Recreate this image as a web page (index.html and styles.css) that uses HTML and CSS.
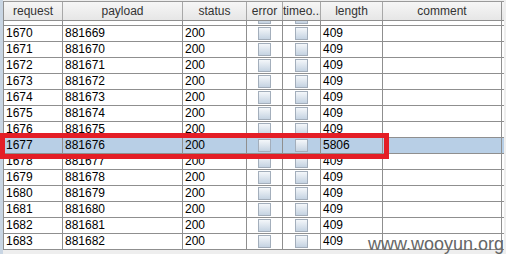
FILE: index.html
```html
<!DOCTYPE html>
<html>
<head>
<meta charset="utf-8">
<link rel="stylesheet" href="styles.css">
</head>
<body>
<div class="frame">
  <div class="table">
    <div class="head">
      <div class="hc">request</div>
      <div class="hc">payload</div>
      <div class="hc">status</div>
      <div class="hc">error</div>
      <div class="hc">timeo...</div>
      <div class="hc">length</div>
      <div class="hc">comment</div>
    </div>
    <div class="viewport">
      <div class="rows" id="rows"></div>
    </div>
  </div>
</div>
<div class="redbox"></div>
<div class="watermark">www.wooyun.org</div>
<script>
  var rows = document.getElementById('rows');
  var html = '';
  for (var r = 1669; r <= 1683; r++) {
    var sel = r === 1677;
    html += '<div class="row' + (sel ? ' sel' : '') + '">' +
      '<div class="c">' + r + '</div>' +
      '<div class="c">' + (r - 1 + 880000) + '</div>' +
      '<div class="c">200</div>' +
      '<div class="c cb"><span class="box"></span></div>' +
      '<div class="c cb"><span class="box"></span></div>' +
      '<div class="c">' + (sel ? '5806' : '409') + '</div>' +
      '<div class="c"></div>' +
      '</div>';
  }
  rows.innerHTML = html;
</script>
</body>
</html>
```

FILE: styles.css
```css
html, body {
  margin: 0;
  padding: 0;
}
body {
  width: 506px;
  height: 254px;
  overflow: hidden;
  background: #eeeeee;
  position: relative;
  font-family: "Liberation Sans", Arial, sans-serif;
  font-size: 12px;
}
.frame {
  border-left: 3px solid #c8d5e3;
  padding-top: 1px;
  height: 253px;
}
.table {
  width: 500px;
  border-left: 1px solid #8f8f8f;
}
.head {
  display: grid;
  grid-template-columns: 59px 120px 64px 36px 38px 62px 119px;
  border-top: 1px solid #9a9a9a;
  border-bottom: 1px solid #8f8f8f;
  background: linear-gradient(#f6f6f6, #e6e6e6);
}
.hc {
  height: 18px;
  line-height: 18px;
  text-align: center;
  color: #333;
  border-right: 1px solid #a8a8a8;
  white-space: nowrap;
  overflow: hidden;
}
.hc:last-child { border-right: 1px solid #8f8f8f; }
.viewport {
  height: 229px;
  overflow: hidden;
  background: #ffffff;
}
.rows {
  margin-top: -11px;
}
.row {
  display: grid;
  grid-template-columns: 59px 120px 64px 36px 38px 62px 119px;
  border-bottom: 1px solid #8f8f8f;
  background: #ffffff;
}
.row.sel {
  background: #b8cfe6;
}
.c {
  height: 15px;
  line-height: 15px;
  padding-left: 2px;
  border-right: 1px solid #8f8f8f;
  color: #000;
  white-space: nowrap;
  overflow: hidden;
}
.cb {
  padding-left: 0;
  display: flex;
  align-items: center;
  justify-content: center;
}
.box {
  width: 11px;
  height: 11px;
  border: 1px solid #a3aebb;
  background: linear-gradient(#f4f7fa, #c5d3e2);
}
.redbox {
  position: absolute;
  left: 0;
  top: 133px;
  width: 379px;
  height: 16px;
  border: 5px solid #e41e26;
}
.watermark {
  position: absolute;
  left: 368px;
  top: 234px;
  font-size: 18px;
  line-height: 20px;
  color: #666666;
  letter-spacing: 0;
}
```
